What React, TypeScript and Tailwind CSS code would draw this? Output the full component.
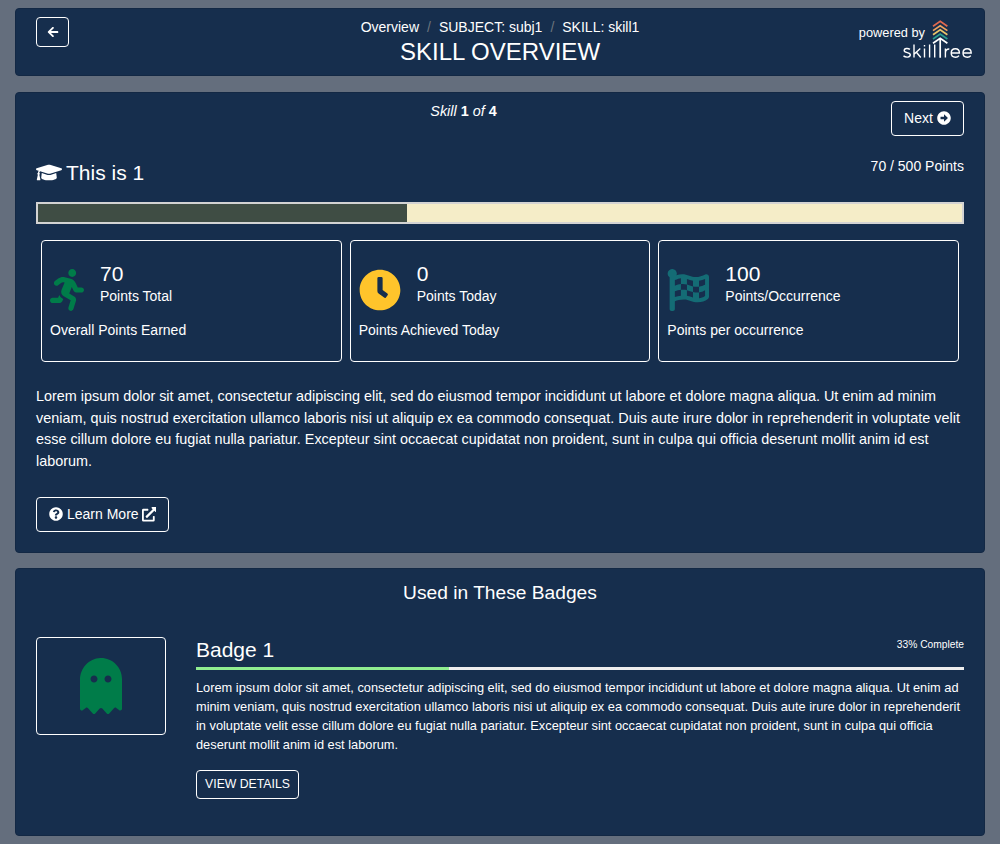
import type { ReactNode } from "react";
import {
  FaArrowAltCircleRight,
  FaArrowLeft,
  FaClock,
  FaExternalLinkAlt,
  FaFlagCheckered,
  FaGhost,
  FaGraduationCap,
  FaQuestionCircle,
  FaRunning,
} from "react-icons/fa";

const LOREM =
  "Lorem ipsum dolor sit amet, consectetur adipiscing elit, sed do eiusmod tempor incididunt ut labore et dolore magna aliqua. Ut enim ad minim veniam, quis nostrud exercitation ullamco laboris nisi ut aliquip ex ea commodo consequat. Duis aute irure dolor in reprehenderit in voluptate velit esse cillum dolore eu fugiat nulla pariatur. Excepteur sint occaecat cupidatat non proident, sunt in culpa qui officia deserunt mollit anim id est laborum.";

function SkillTreeLogo() {
  return (
    <svg width="72" height="42" viewBox="0 0 72 42" fill="none" className="shrink-0">
      <g strokeWidth="1.7">
        <path d="M33 6.2 40.2 1.3 47.4 6.2" stroke="#e0694f" />
        <path d="M33 10.6 40.2 5.7 47.4 10.6" stroke="#f0a35e" />
        <path d="M33 14.8 40.2 9.9 47.4 14.8" stroke="#e9c46a" />
        <path d="M33 19 40.2 14.1 47.4 19" stroke="#2a9d8f" />
        <path d="M33 23.2 40.2 18.3 47.4 23.2M40.2 18.6V37.8" stroke="#fff" />
      </g>
      <g stroke="#fff" strokeWidth="1.4">
        <path d="M9.9 29.4C8.2 28 4.2 28 4.2 30.5 4.2 33.4 10.3 31.8 10.3 34.8 10.3 37.7 5.6 37.6 3.5 35.9" />
        <path d="M14 24.5V37.5M20.3 28.5 14.3 34.1M16.4 32.3 20.8 37.5" />
        <path d="M24.5 28.5V37.5M24.5 25V26.6M29.6 24.5V37.5M34.7 24.5V37.5" />
        <path d="M45.4 28.5V37.5M45.4 33C45.4 30.2 47 28.9 49.3 29" />
        <path d="M51.4 33H59.4C59.4 30.5 57.7 28.8 55.4 28.8 52.9 28.8 51.2 30.5 51.2 33 51.2 35.5 53 37.2 55.6 37.2 57.1 37.2 58.2 36.6 59 35.6" />
        <path d="M63.2 33H71.2C71.2 30.5 69.5 28.8 67.2 28.8 64.7 28.8 63 30.5 63 33 63 35.5 64.8 37.2 67.4 37.2 68.9 37.2 70 36.6 70.8 35.6" />
      </g>
    </svg>
  );
}

function Stat({ icon, value, unit, label }: { icon: ReactNode; value: string; unit: string; label: string }) {
  return (
    <div className="h-[122px] flex-1 rounded border border-white px-2 pt-5">
      <div className="flex h-[51px] gap-4">
        <div className="pt-2 text-[42px]">{icon}</div>
        <div>
          <div className="text-[21px] leading-[25px]">{value}</div>
          <div className="leading-[21px]">{unit}</div>
        </div>
      </div>
      <div className="mt-2 leading-[21px]">{label}</div>
    </div>
  );
}

export default function App() {
  return (
    <div className="flex min-h-[844px] flex-col bg-[#646e7d] px-[15px] pt-2 font-['Liberation_Sans',Arial,sans-serif] text-[14px] leading-[21px] text-white">
      <header className="grid h-[68px] grid-cols-[1fr_auto_1fr] rounded border border-[#132844] bg-[#162e4d] px-5">
        <div className="pt-2">
          <button aria-label="Back" className="flex h-[30px] w-[33px] items-center justify-center rounded border border-white pb-px text-[12px]">
            <FaArrowLeft />
          </button>
        </div>
        <div className="pt-2 text-center">
          <nav className="flex justify-center gap-2">
            <span>Overview</span>
            <span className="text-[#6c757d]">/</span>
            <span>SUBJECT: subj1</span>
            <span className="text-[#6c757d]">/</span>
            <span>SKILL: skill1</span>
          </nav>
          <h1 className="text-[24px] leading-[27px]">SKILL OVERVIEW</h1>
        </div>
        <div className="-mr-2 flex justify-end pt-[11px]">
          <span className="-mr-[25px] pt-[3px] text-[12.8px] leading-5">powered by</span>
          <SkillTreeLogo />
        </div>
      </header>

      <section className="mt-4 h-[461px] rounded border border-[#132844] bg-[#162e4d] px-5 pt-2">
        <div className="flex h-[35px]">
          <div className="flex-1 text-center text-[14.4px]">
            <i>Skill</i> <b>1</b> <i>of</i> <b>4</b>
          </div>
          <button className="flex h-[35px] w-[73px] items-center justify-center gap-1 rounded border border-white">
            Next <FaArrowAltCircleRight className="mb-px" />
          </button>
        </div>
        <div className="mt-5 flex h-[46px] justify-between">
          <h2 className="flex items-center gap-1 self-start pt-[3px] text-[21px] leading-[28px]">
            <FaGraduationCap className="mb-0.5 h-[21px] w-[26px]" />
            This is 1
          </h2>
          <span>70 / 500 Points</span>
        </div>
        <div className="flex h-[22px] border-2 border-[#d3d3d3] bg-[#f5edc8]">
          <div className="w-[369px] bg-[#3f4d44]" />
        </div>
        <div className="mt-4 flex gap-2 px-[5px]">
          <Stat icon={<FaRunning className="h-[42px] w-[34px] text-[#007c49]" />} value="70" unit="Points Total" label="Overall Points Earned" />
          <Stat icon={<FaClock className="text-[#ffc42b]" />} value="0" unit="Points Today" label="Points Achieved Today" />
          <Stat icon={<FaFlagCheckered className="text-[#146c75]" />} value="100" unit="Points/Occurrence" label="Points per occurrence" />
        </div>
        <p className="mt-6 text-[14.4px] leading-[21.6px]">{LOREM}</p>
        <button className="mt-[25px] flex h-[35px] w-[133px] items-center gap-1 rounded border border-white pl-3 whitespace-nowrap">
          <FaQuestionCircle className="mb-px" /> Learn More <FaExternalLinkAlt className="mb-px -ml-px size-[14.5px]" />
        </button>
      </section>

      <section className="mt-[15px] h-[268px] rounded border border-[#132844] bg-[#162e4d] px-5">
        <h2 className="pt-3 text-center text-[19.2px] leading-6">Used in These Badges</h2>
        <div className="mt-8 flex gap-[30px]">
          <div className="flex h-[98px] w-[130px] shrink-0 items-center justify-center rounded border border-white">
            <FaGhost className="h-14 w-[42px] text-[#007c49]" />
          </div>
          <div className="flex-1">
            <div className="flex h-[30px] justify-between">
              <h3 className="text-[21px] leading-[25px]">Badge 1</h3>
              <span className="text-[10.24px] leading-[15px]">33% Complete</span>
            </div>
            <div className="h-[3px] bg-[#eeeeee]">
              <div className="h-full w-[33%] bg-[#90ee90]" />
            </div>
            <p className="mt-2 text-[12.8px] leading-[19px]">{LOREM}</p>
            <button className="mt-4 h-[29px] w-[103px] rounded border border-white pb-0.5 text-[12.25px] leading-[18px] whitespace-nowrap">
              VIEW DETAILS
            </button>
          </div>
        </div>
      </section>
    </div>
  );
}
